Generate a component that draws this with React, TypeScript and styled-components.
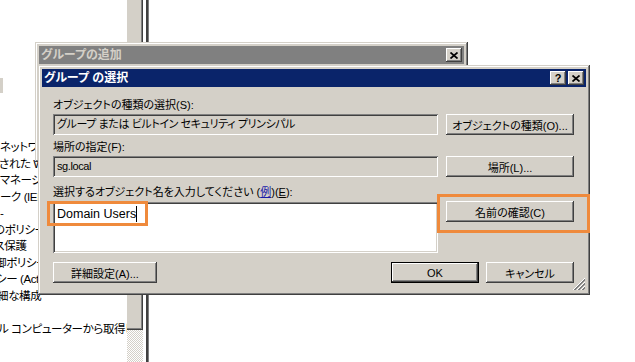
import React from "react";
import styled, { createGlobalStyle, css } from "styled-components";

const GlobalStyle = createGlobalStyle`
  html, body { margin: 0; padding: 0; background: #ffffff; overflow: hidden; }
  body {
    font-family: "Liberation Sans", "Noto Sans CJK JP", sans-serif;
    font-feature-settings: "palt" 1;
    font-size: 11px;
    color: #000;
  }
`;

const UI_FONT = `"Liberation Sans", "Noto Sans CJK JP", sans-serif`;

const Desktop = styled.div`
  position: relative;
  width: 635px;
  height: 362px;
  overflow: hidden;
  background: #fff;
`;

/* ---------- background explorer pane ---------- */
const Background = styled.div`
  display: flex;
  height: 100%;
`;

const ListPane = styled.div`
  width: 127px;
  flex: none;
  overflow: hidden;
  display: flex;
  flex-direction: column;
  padding-top: 78px;
  box-sizing: border-box;
  font-family: ${UI_FONT};
  font-size: 11.5px;
  letter-spacing: -0.4px;
`;

const SelMark = styled.div`
  width: 3px;
  height: 15px;
  background: #d4d0c8;
  margin-bottom: 46px;
`;

const ListLine = styled.div<{ $offset?: number }>`
  height: 16.5px;
  line-height: 16.5px;
  white-space: nowrap;
  margin-left: ${(p) => p.$offset ?? 0}px;
`;

const ScrollBar = styled.div`
  width: 16px;
  flex: none;
  display: flex;
  flex-direction: column;
`;

const Thumb = styled.div`
  height: 330px;
  background: #d4d0c8;
  box-shadow: inset -1px -1px #404040, inset -2px -2px #808080,
    inset 1px 0 #d4d0c8;
`;

const Track = styled.div`
  flex: 1;
  background-color: #fff;
  background-image: repeating-conic-gradient(#d4d0c8 0 25%, #ffffff 0 50%);
  background-size: 2px 2px;
`;

const Splitter = styled.div`
  width: 2px;
  margin-left: 3px;
  flex: none;
  background: #404040;
  box-shadow: 1px 0 #808080;
`;

/* ---------- windows ---------- */
const Window = styled.div<{ $x: number; $y: number; $w: number; $h: number }>`
  position: absolute;
  left: ${(p) => p.$x}px;
  top: ${(p) => p.$y}px;
  width: ${(p) => p.$w}px;
  height: ${(p) => p.$h}px;
  box-sizing: border-box;
  padding: 4px;
  background: #d4d0c8;
  box-shadow: inset -1px -1px #404040, inset 1px 1px #d4d0c8,
    inset -2px -2px #808080, inset 2px 2px #ffffff;
  display: flex;
  flex-direction: column;
`;

const TitleBar = styled.div<{ $active?: boolean }>`
  height: 18px;
  flex: none;
  display: flex;
  align-items: center;
  padding: 0 2px 0 2px;
  background: ${(p) => (p.$active ? "#0a246a" : "#808080")};
  color: ${(p) => (p.$active ? "#ffffff" : "#d4d0c8")};
`;

const TitleText = styled.div`
  flex: 1;
  font-family: ${UI_FONT};
  font-weight: bold;
  font-size: 12px;
  line-height: 18px;
  white-space: nowrap;
`;

const CaptionButtons = styled.div`
  display: flex;
  gap: 2px;
`;

const raised = css`
  background: #d4d0c8;
  box-shadow: inset -1px -1px #404040, inset 1px 1px #ffffff,
    inset -2px -2px #808080, inset 2px 2px #d4d0c8;
`;

const CapButton = styled.div`
  ${raised};
  width: 16px;
  height: 14px;
  display: flex;
  align-items: center;
  justify-content: center;
  color: #000;
  font-family: "Liberation Sans", sans-serif;
  font-weight: bold;
  font-size: 11px;
  line-height: 14px;
`;

const Body = styled.div`
  flex: 1;
  position: relative;
  padding: 11px 12px 0 11px;
  display: flex;
  flex-direction: column;
  font-family: ${UI_FONT};
  font-size: 11px;
`;

const Label = styled.div<{ $gap?: number }>`
  height: 14px;
  line-height: 14px;
  margin-top: ${(p) => p.$gap ?? 0}px;
  margin-bottom: 2px;
  white-space: nowrap;
`;

const Row = styled.div`
  display: grid;
  grid-template-columns: 385px 128px;
  column-gap: 8px;
  align-items: start;
`;

const sunken = css`
  box-shadow: inset 1px 1px #808080, inset -1px -1px #ffffff,
    inset 2px 2px #404040, inset -2px -2px #d4d0c8;
`;

const ReadField = styled.div`
  ${sunken};
  height: 21px;
  box-sizing: border-box;
  padding: 0 4px;
  line-height: 21px;
  background: #d4d0c8;
  white-space: nowrap;
  overflow: hidden;
  letter-spacing: -0.4px;
`;

const NameBox = styled.div`
  ${sunken};
  height: 51px;
  margin-top: 1px;
  box-sizing: border-box;
  padding: 3px 4px;
  background: #fff;
  font-family: ${UI_FONT};
  font-size: 12.5px;
  line-height: 18px;
  display: flex;
  align-items: flex-start;
`;

const Caret = styled.span`
  display: inline-block;
  width: 1px;
  height: 16px;
  margin-top: 1px;
  background: #000;
`;

const Button = styled.div<{ $default?: boolean; $w?: number }>`
  ${raised};
  height: 21px;
  width: ${(p) => (p.$w ? `${p.$w}px` : "auto")};
  box-sizing: border-box;
  display: flex;
  align-items: center;
  justify-content: center;
  white-space: nowrap;
  font-size: 11px;
  ${(p) =>
    p.$default &&
    css`
      box-shadow: inset 0 0 0 1px #000, inset -2px -2px #404040,
        inset 2px 2px #ffffff, inset -3px -3px #808080;
    `}
`;

const Link = styled.span`
  color: #1a1aa8;
  text-decoration: underline;
`;

const Acc = styled.span`
  text-decoration: underline;
`;

const ButtonRow = styled.div`
  display: flex;
  gap: 7px;
  margin-top: 9px;
`;

const Spacer = styled.div`
  flex: 1;
`;

const Grip = styled.svg`
  position: absolute;
  right: 0;
  bottom: 0;
`;

const Highlight = styled.div<{ $x: number; $y: number; $w: number; $h: number }>`
  position: absolute;
  left: ${(p) => p.$x}px;
  top: ${(p) => p.$y}px;
  width: ${(p) => p.$w}px;
  height: ${(p) => p.$h}px;
  box-sizing: border-box;
  border: 3px solid #ef8a3c;
`;

const CloseGlyph = () => (
  <svg width="8" height="7" viewBox="0 0 8 7">
    <path d="M0.5 0.5 L7.5 6.5 M7.5 0.5 L0.5 6.5" stroke="#000" strokeWidth="1.7" />
  </svg>
);

const listLines: { text: string; offset?: number }[] = [
  { text: "ネットワーク接続" },
  { text: "された Windows", offset: -1 },
  { text: "マネージャー" },
  { text: "ーク (IEEE 802.1X)" },
  { text: "-" },
  { text: "のポリシー", offset: -6 },
  { text: "ルス保護", offset: -16 },
  { text: "制御ポリシー", offset: -16 },
  { text: "シー (Active Directory)", offset: -4 },
  { text: "詳細な構成", offset: -14 },
  { text: "" },
  { text: "ル コンピューターから取得したポリシー", offset: -2 },
];

export default function App() {
  return (
    <Desktop>
      <GlobalStyle />
      <Background>
        <ListPane>
          <SelMark />
          {listLines.map((l, i) => (
            <ListLine key={i} $offset={l.offset}>
              {l.text}
            </ListLine>
          ))}
        </ListPane>
        <ScrollBar>
          <Thumb />
          <Track />
        </ScrollBar>
        <Splitter />
      </Background>

      <Window $x={35} $y={42} $w={433} $h={120}>
        <TitleBar>
          <TitleText>グループの追加</TitleText>
          <CaptionButtons>
            <CapButton>
              <CloseGlyph />
            </CapButton>
          </CaptionButtons>
        </TitleBar>
      </Window>

      <Window $x={38} $y={65} $w={552} $h={230}>
        <TitleBar $active>
          <TitleText>グループ の選択</TitleText>
          <CaptionButtons>
            <CapButton>?</CapButton>
            <CapButton>
              <CloseGlyph />
            </CapButton>
          </CaptionButtons>
        </TitleBar>
        <Body>
          <Label>オブジェクトの種類の選択(S):</Label>
          <Row>
            <ReadField>グループ または ビルトイン セキュリティ プリンシパル</ReadField>
            <Button>オブジェクトの種類(O)...</Button>
          </Row>
          <Label $gap={5}>場所の指定(F):</Label>
          <Row>
            <ReadField>sg.local</ReadField>
            <Button>場所(L)...</Button>
          </Row>
          <Label $gap={8}>
            選択するオブジェクト名を入力してください (<Link>例</Link>)(<Acc>E</Acc>):
          </Label>
          <Row>
            <NameBox>
              Domain Users
              <Caret />
            </NameBox>
            <Button>名前の確認(C)</Button>
          </Row>
          <ButtonRow>
            <Button $w={104}>詳細設定(A)...</Button>
            <Spacer />
            <Button $default $w={88}>OK</Button>
            <Button $w={88}>キャンセル</Button>
          </ButtonRow>
          <Grip width="13" height="13" viewBox="0 0 13 13">
            <path d="M12 1 L1 12 M12 5 L5 12 M12 9 L9 12" stroke="#808080" strokeWidth="1" />
            <path d="M12 2 L2 12 M12 6 L6 12 M12 10 L10 12" stroke="#808080" strokeWidth="1" />
            <path d="M12 0 L0 12 M12 4 L4 12 M12 8 L8 12" stroke="#ffffff" strokeWidth="1" />
          </Grip>
        </Body>
      </Window>

      <Highlight $x={47} $y={201} $w={101} $h={25} />
      <Highlight $x={437} $y={194} $w={153} $h={39} />
    </Desktop>
  );
}
